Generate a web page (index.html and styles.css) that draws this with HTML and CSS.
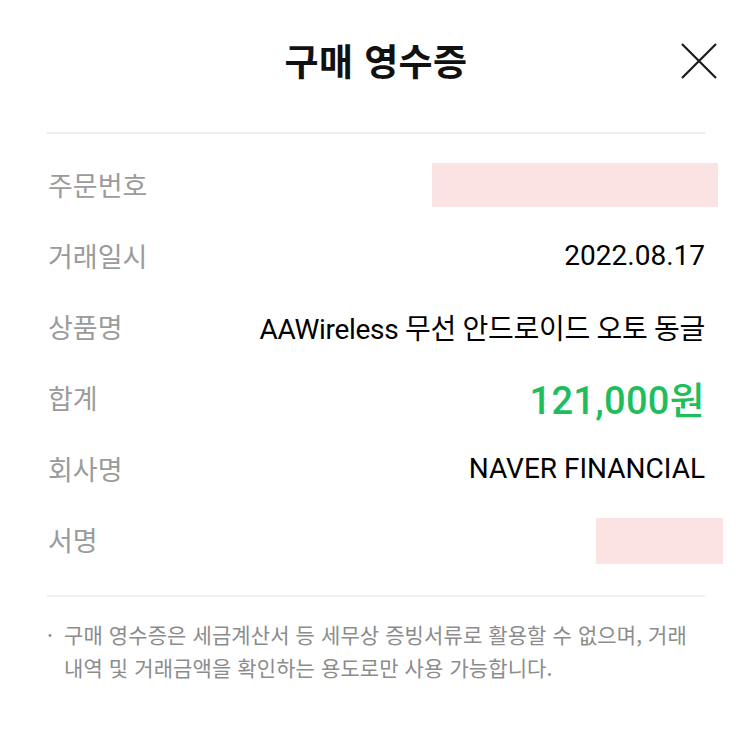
FILE: index.html
```html
<!DOCTYPE html>
<html lang="ko">
<head>
<meta charset="utf-8">
<link rel="stylesheet" href="styles.css">
</head>
<body>
<div class="sheet">
  <header class="header">
    <span class="spacer"></span>
    <h1 class="title">구매 영수증</h1>
    <button class="close" aria-label="닫기">
      <svg width="36" height="36" viewBox="0 0 36 36"><path d="M1 1 L35 35 M35 1 L1 35" stroke="#1a1a1a" stroke-width="2.2" fill="none"/></svg>
    </button>
  </header>
  <div class="rows">
    <div class="row"><span class="label">주문번호</span><span class="redact redact-order"></span></div>
    <div class="row"><span class="label">거래일시</span><span class="value">2022.08.17</span></div>
    <div class="row"><span class="label">상품명</span><span class="value product">AAWireless 무선 안드로이드 오토 동글</span></div>
    <div class="row"><span class="label">합계</span><span class="value total">121,000원</span></div>
    <div class="row"><span class="label">회사명</span><span class="value">NAVER FINANCIAL</span></div>
    <div class="row"><span class="label">서명</span><span class="redact redact-sign"></span></div>
  </div>
  <div class="note">
    <span class="bullet">·</span>
    <p class="note-text">구매 영수증은 세금계산서 등 세무상 증빙서류로 활용할 수 없으며, 거래 내역 및 거래금액을 확인하는 용도로만 사용 가능합니다.</p>
  </div>
</div>
</body>
</html>
```

FILE: styles.css
```css
* { box-sizing: border-box; }
html, body { margin: 0; padding: 0; background: #fff; }
body { font-family: Roboto, "Noto Sans CJK KR", sans-serif; }
.sheet { width: 750px; }
.header {
  display: grid;
  grid-template-columns: 1fr auto 1fr;
  align-items: center;
  height: 134px;
  padding: 0 0 12px 0;
  border-bottom: 2px solid #ececec;
  margin: 0 45px 0 47px;
}
.title {
  margin: 0;
  font-family: "Noto Sans CJK KR", sans-serif;
  font-weight: 700;
  font-size: 37px;
  color: #111;
  letter-spacing: 0.4px;
}
.close {
  justify-self: end;
  margin-right: -12px;
  margin-top: 2px;
  border: 0;
  background: none;
  padding: 0;
  width: 36px;
  height: 36px;
  display: flex;
}
.rows { padding: 15px 45px 0 48px; }
.row {
  height: 71px;
  display: flex;
  align-items: center;
  justify-content: space-between;
}
.label {
  font-family: "Noto Sans CJK KR", sans-serif;
  font-size: 27px;
  color: #9b9b9b;
}
.value {
  font-size: 28px;
  color: #000;
}
.product { letter-spacing: -0.3px; }
.total {
  font-size: 38px;
  color: #1ebd5e;
  letter-spacing: 0.3px;
  font-weight: 500;
}
.redact { background: #fce3e3; display: block; }
.redact-order { width: 286px; height: 44px; margin-right: -13px; }
.redact-sign { width: 127px; height: 46px; margin-right: -18px; margin-top: 2px; }
.note {
  margin: 20px 45px 0 47px;
  border-top: 2px solid #f0f0f0;
  padding-top: 21px;
  display: flex;
  gap: 9px;
  font-family: "Noto Sans CJK KR", sans-serif;
  font-size: 21px;
  line-height: 33px;
  color: #8c8c8c;
}
.bullet { width: 8px; flex: none; }
.note-text { margin: 0; letter-spacing: 0.1px; word-break: keep-all; }
```
